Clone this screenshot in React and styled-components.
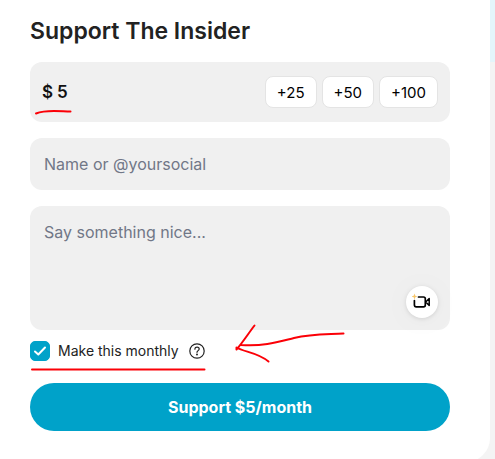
import React, { useState } from "react";
import styled, { createGlobalStyle } from "styled-components";

const GlobalStyle = createGlobalStyle`
  *, *::before, *::after { box-sizing: border-box; }
  body { margin: 0; }
  body, button, input, textarea { font-family: Inter, "Liberation Sans", sans-serif; }
`;

const Page = styled.main`
  height: 100vh;
  overflow: hidden;
  padding-right: 5px;
  background: linear-gradient(#e4f5fb 62px, #f4f4f4 62px);
`;

const Card = styled.form`
  display: flex;
  flex-direction: column;
  padding: 16px 40px 31px 30px;
  background: #fff;
  border-bottom-right-radius: 24px;
`;

const Title = styled.h1`
  margin: 0 0 16px;
  font-size: 23px;
  line-height: 30px;
  font-weight: 600;
  color: #222;
`;

const Fields = styled.div`
  display: flex;
  flex-direction: column;
  gap: 16px;
`;

const AmountBox = styled.div`
  display: flex;
  align-items: center;
  justify-content: space-between;
  height: 60px;
  padding: 0 12px;
  border-radius: 12px;
  background: #f0f0f0;
`;

const Amount = styled.label`
  position: relative;
  display: flex;
  gap: 4px;
  font-size: 17px;
  line-height: 24px;
  font-weight: 600;
  color: #111;
`;

const AmountInput = styled.input`
  width: 80px;
  padding: 0;
  border: 0;
  outline: 0;
  background: transparent;
  font: inherit;
  color: inherit;
`;

const Presets = styled.div`
  display: flex;
  gap: 5px;
`;

const Preset = styled.button`
  height: 32px;
  padding: 0 11px;
  border: 1px solid #e4e4e4;
  border-radius: 8px;
  background: #fff;
  font-size: 15px;
  color: #000;
`;

const NameInput = styled.input`
  width: 100%;
  height: 52px;
  padding: 0 14px;
  border: 0;
  border-radius: 12px;
  background: #f0f0f0;
  font-size: 16px;
  color: #222;
  &::placeholder { color: #717787; opacity: 1; }
`;

const MessageBox = styled.div`
  position: relative;
  display: flex;
`;

const Message = styled.textarea`
  width: 100%;
  height: 124px;
  padding: 14px;
  border: 0;
  border-radius: 12px;
  resize: none;
  background: #f0f0f0;
  font-size: 16px;
  line-height: 24px;
  color: #222;
  &::placeholder { color: #717787; opacity: 1; }
`;

const VideoButton = styled.button`
  position: absolute;
  right: 12px;
  bottom: 12px;
  display: grid;
  place-items: center;
  width: 32px;
  height: 32px;
  padding: 0;
  border: 0;
  border-radius: 50%;
  background: #fff;
  box-shadow: 0 1px 4px rgba(0, 0, 0, 0.12), 0 2px 32px rgba(0, 0, 0, 0.04);
`;

const MonthlyRow = styled.div`
  position: relative;
  display: flex;
  align-self: flex-start;
  align-items: center;
  gap: 10px;
  margin: 11px 0 22px;
`;

const MonthlyLabel = styled.label`
  display: flex;
  align-items: center;
  gap: 8px;
  font-size: 14px;
  line-height: 20px;
  color: #222;
`;

const Checkbox = styled.input`
  appearance: none;
  width: 20px;
  height: 20px;
  margin: 0;
  border: 1px solid #00a2c9;
  border-radius: 5px;
  background: #fff;
  &:checked { background: #00a2c9; }
`;

const CheckHolder = styled.span`
  position: relative;
  display: flex;
`;

const CheckMark = styled.svg`
  position: absolute;
  inset: 0;
  pointer-events: none;
`;

const HelpButton = styled.button`
  display: flex;
  padding: 0;
  border: 0;
  background: none;
`;

const SubmitButton = styled.button`
  width: 100%;
  height: 48px;
  border: 0;
  border-radius: 24px;
  background: #00a2c9;
  font-size: 16px;
  font-weight: 700;
  color: #fff;
`;

const Ink = styled.svg`
  position: absolute;
  left: ${(p) => p.$left}px;
  top: ${(p) => p.$top}px;
  fill: none;
  stroke: #fb0007;
  stroke-width: 2;
  stroke-linecap: round;
  stroke-linejoin: round;
  pointer-events: none;
`;

export default function App() {
  const [amount, setAmount] = useState("5");
  const [monthly, setMonthly] = useState(true);
  return (
    <Page>
      <GlobalStyle />
      <Card onSubmit={(e) => e.preventDefault()}>
        <Title>Support The Insider</Title>
        <Fields>
          <AmountBox>
            <Amount>
              <span>$</span>
              <AmountInput aria-label="Amount" value={amount} onChange={(e) => setAmount(e.target.value)} />
              <Ink $left={-8} $top={26} width="40" height="10" aria-hidden="true">
                <path d="M2 7.5C7 5.5 13 5 20 5S31 5.500 36.500 5.500" />
              </Ink>
            </Amount>
            <Presets>
              {[25, 50, 100].map((n) => (
                <Preset key={n} type="button" onClick={() => setAmount(String(Number(amount) + n))}>{`+${n}`}</Preset>
              ))}
            </Presets>
          </AmountBox>
          <NameInput aria-label="Name" placeholder="Name or @yoursocial" />
          <MessageBox>
            <Message aria-label="Message" placeholder="Say something nice..." />
            <VideoButton type="button" aria-label="Record a video">
              <svg width="20" height="20" viewBox="0 0 20 20" fill="none" stroke="#000" strokeWidth="1.7" strokeLinejoin="round" strokeLinecap="round">
                <path d="M6.500 5H11.500Q13.300 5 13.300 6.800V13Q13.300 14.800 11.500 14.800H4.200Q2.400 14.800 2.400 13V8.500" />
                <path d="M13.700 10L17.200 6.500V13.500Z" strokeWidth="1.5" />
                <path d="M2.500 1.500L3.300 3.700L5.500 4.500L3.300 5.300L2.500 7.500L1.700 5.300L-.5 4.500L1.700 3.700Z" fill="#f8c76b" stroke="none" />
              </svg>
            </VideoButton>
          </MessageBox>
        </Fields>
        <MonthlyRow>
          <MonthlyLabel>
            <CheckHolder>
              <Checkbox type="checkbox" checked={monthly} onChange={(e) => setMonthly(e.target.checked)} />
              {monthly && (
                <CheckMark width="20" height="20" viewBox="0 0 20 20" fill="none" stroke="#fff" strokeWidth="2" strokeLinecap="round" strokeLinejoin="round" aria-hidden="true">
                  <path d="M5 10.500L8.300 13.500L15 6.500" />
                </CheckMark>
              )}
            </CheckHolder>
            Make this monthly
          </MonthlyLabel>
          <HelpButton type="button" aria-label="About monthly support">
            <svg width="16" height="16" viewBox="0 0 16 16" fill="none" stroke="#222" strokeWidth="1.200" strokeLinecap="round" strokeLinejoin="round">
              <circle cx="8" cy="8" r="7.200" />
              <path d="M5.900 6.200C5.900 3.200 10.200 3.500 10.200 6C10.200 7.600 8 7.700 8 9.300" />
              <circle cx="8" cy="11.600" r=".4" fill="#222" />
            </svg>
          </HelpButton>
          <Ink $left={0} $top={24} width="177" height="8" aria-hidden="true">
            <path d="M2 4.500H174.500" />
          </Ink>
          <Ink $left={204} $top={-18} width="114" height="42" aria-hidden="true">
            <path d="M109.500 10.500C91 11.500 77 11 60 15C44 19 31 23.500 7 22M20.500 2.500C14 11 9 19 2.500 26.500V24.500C10 29 24 29.500 34.500 38.500" />
          </Ink>
        </MonthlyRow>
        <SubmitButton type="submit">Support ${amount}/month</SubmitButton>
      </Card>
    </Page>
  );
}
